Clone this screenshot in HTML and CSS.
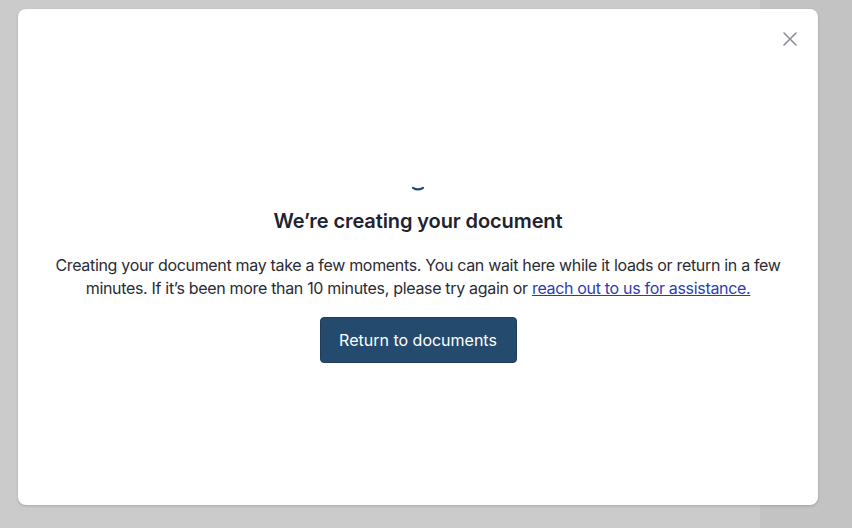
FILE: index.html
```html
<!DOCTYPE html>
<html lang="en">
<head>
  <meta charset="UTF-8" />
  <meta name="viewport" content="width=device-width, initial-scale=1.0"/>
  <title>Creating document</title>
  <link rel="stylesheet" href="styles.css">
</head>
<body>

  <div class="page">
    <div class="page-main"></div>
    <div class="page-side"></div>
  </div>

  <div class="modal" role="dialog">
    <button class="modal-close" aria-label="Close">
      <svg width="16" height="16" viewBox="0 0 16 16">
        <path d="M2 2 L14 14 M14 2 L2 14" stroke="#8b8c9f" stroke-width="1.6" stroke-linecap="round" fill="none"/>
      </svg>
    </button>

    <div class="modal-body">
      <svg class="spinner" width="30" height="30" viewBox="0 0 30 30">
        <path d="M10 22.8 A9 9 0 0 0 20 22.8" stroke="#24496e" stroke-width="2.2" stroke-linecap="round" fill="none"/>
      </svg>
      <h2>We’re creating your document</h2>
      <p>
        Creating your document may take a few moments. You can wait here while it loads or return in a few
        minutes. If it’s been more than 10 minutes, please try again or <a href="#">reach out to us for assistance.</a>
      </p>
      <button class="primary-button">Return to documents</button>
    </div>
  </div>

</body>
</html>
```

FILE: styles.css
```css
body {
  margin: 0;
  font-family: 'Inter', 'Noto Sans', sans-serif;
  color: #2a2c35;
  height: 528px;
  overflow: hidden;
}

.page {
  display: flex;
  height: 528px;
}
.page-main {
  flex: 1;
  background-color: #cbcbcb;
}
.page-side {
  width: 92px;
  background-color: #c3c3c3;
}

/* Dialog box over the page */
.modal {
  position: absolute;
  top: 9px;
  left: 18px;
  width: 800px;
  height: 496px;
  background: white;
  border-radius: 8px;
  box-shadow: 0 1px 3px rgba(0,0,0,0.18);
  display: flex;
  flex-direction: column;
  justify-content: center;
}

.modal-close {
  position: absolute;
  top: 22px;
  right: 20px;
  background: none;
  border: none;
  padding: 0;
  width: 16px;
  height: 16px;
  cursor: pointer;
}

.modal-body {
  display: flex;
  flex-direction: column;
  align-items: center;
  text-align: center;
  padding: 14px 30px 0;
}

.spinner {
  display: block;
  margin-bottom: 14px;
}

.modal-body h2 {
  margin: 0 0 21px;
  font-size: 20px;
  font-weight: 600;
  color: #1f2230;
  letter-spacing: -0.1px;
}

.modal-body p {
  margin: 0 0 17px;
  font-size: 16px;
  line-height: 23px;
  letter-spacing: -0.32px;
}

.modal-body a {
  color: #2b3eae;
  text-decoration: underline;
}

.primary-button {
  padding: 0;
  height: 46px;
  width: 197px;
  white-space: nowrap;
  font-family: inherit;
  font-size: 16px;
  background-color: #244b6e;
  color: white;
  border: 1px solid #1d3d5b;
  border-radius: 4px;
  cursor: pointer;
}
```
